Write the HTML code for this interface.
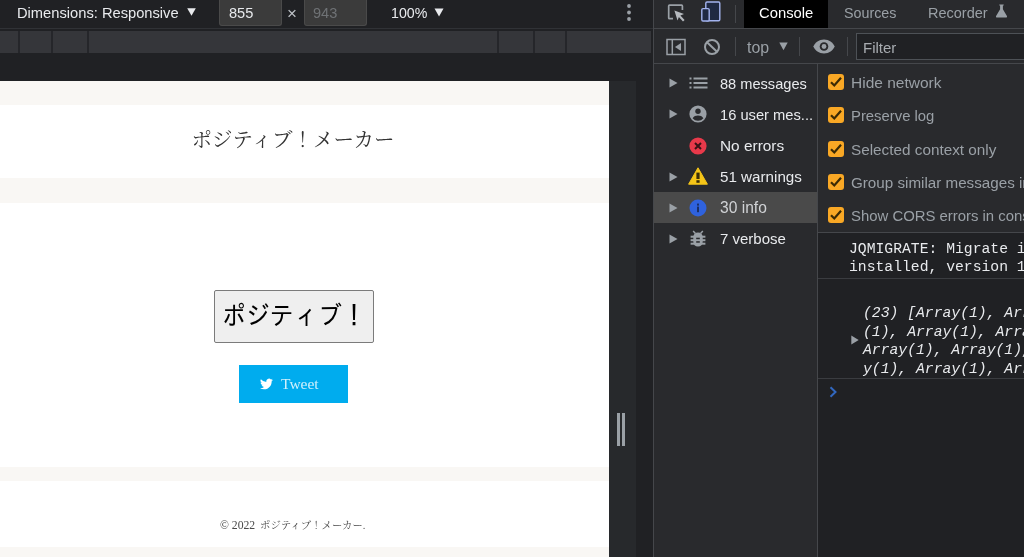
<!DOCTYPE html>
<html lang="ja">
<head>
<meta charset="utf-8">
<title>ポジティブ！メーカー</title>
<style>
*{box-sizing:border-box;margin:0;padding:0}
html,body{width:1024px;height:557px;overflow:hidden;background:#202124}
body{position:relative;font-family:"Liberation Sans","Noto Sans CJK JP",sans-serif;font-size:14.6px;color:#e8eaed}
.abs{position:absolute}
.t{will-change:transform}
.t{position:absolute;white-space:pre;line-height:20px;height:20px}
/* ---------- device toolbar (left) ---------- */
#devbar{left:0;top:0;width:653px;height:28px;background:#202124}
#devline{left:0;top:28px;width:653px;height:1px;background:#303236}
#ruler{left:0;top:31px;width:651px;height:22px;background:#35363a}
.tick{position:absolute;top:31px;width:2px;height:22px;background:#25262a}
.inp{position:absolute;top:0;height:26px;background:#3b3b3b;border:1px solid #4a4a4a;border-top:none;border-radius:0 0 3px 3px}
/* ---------- page ---------- */
#page{left:0;top:81px;width:609px;height:476px;background:#f9f7f4;overflow:hidden}
.white{position:absolute;left:0;width:609px;background:#fff}
#resizer{left:609px;top:81px;width:27px;height:476px;background:#27292c}
/* ---------- devtools ---------- */
#dt{left:653px;top:0;width:371px;height:557px;background:#292a2d;border-left:1px solid #45474b}
.hl{position:absolute;height:1px;background:#45474b}
.vl{position:absolute;width:1px;background:#45474b}
.side{color:#e8eaed}
.dim{color:#9aa0a6}
.mono{font-family:"Liberation Mono",monospace;font-size:14.73px;color:#e8eaed;line-height:18px;height:18px}
.cb{position:absolute;left:828px;width:16px;height:16px;border-radius:3px;background:#f9a825}
.cb svg{position:absolute;left:0;top:0}
</style>
</head>
<body>

<!-- ======= device toolbar ======= -->
<div class="abs" id="devbar"></div>
<div class="abs" id="devline"></div>
<div class="t" style="left:17px;top:3px;font-size:14.7px">Dimensions: Responsive</div>
<svg class="abs" style="left:187px;top:8px" width="9" height="8" viewBox="0 0 9 8"><path d="M0.2 0.3h8.6L4.5 7.8z" fill="#e8eaed"/></svg>
<div class="inp" style="left:219px;width:63px"></div>
<div class="t" style="left:229px;top:3px">855</div>
<div class="t dim" style="left:287px;top:4px;font-size:17px;color:#bdc1c6">×</div>
<div class="inp" style="left:304px;width:63px"></div>
<div class="t" style="left:313px;top:3px;color:#6f7275">943</div>
<div class="t" style="left:391px;top:3px;font-size:14.2px">100%</div>
<svg class="abs" style="left:434px;top:8px" width="10" height="9" viewBox="0 0 10 9"><path d="M0.5 0.5h9L5 8.5z" fill="#e8eaed"/></svg>
<svg class="abs" style="left:626px;top:3px" width="6" height="20" viewBox="0 0 6 20"><circle cx="3" cy="3" r="1.9" fill="#9aa0a6"/><circle cx="3" cy="9.5" r="1.9" fill="#9aa0a6"/><circle cx="3" cy="16" r="1.9" fill="#9aa0a6"/></svg>

<div class="abs" id="ruler"></div>
<div class="tick" style="left:18px"></div>
<div class="tick" style="left:51px"></div>
<div class="tick" style="left:87px"></div>
<div class="tick" style="left:497px"></div>
<div class="tick" style="left:533px"></div>
<div class="tick" style="left:565px"></div>

<!-- ======= emulated page ======= -->
<div class="abs" id="page">
  <div class="white" style="top:24px;height:73px"></div>
  <div class="white" style="top:122px;height:264px"></div>
  <div class="white" style="top:400px;height:66px"></div>
</div>
<div class="t" style="left:188px;top:125px;width:210px;height:30px;line-height:30px;text-align:center;font-family:'Liberation Serif','Noto Serif CJK JP','Noto Serif CJK SC',serif;font-size:20.5px;color:#333">ポジティブ！メーカー</div>

<div class="abs" style="left:214px;top:290px;width:160px;height:53px;background:#efefef;border:1px solid #7b7b7b;border-radius:2px"></div>
<div class="t" style="left:222px;top:300px;height:30px;line-height:30px;font-size:24px;color:#000;font-family:'IPAGothic','Noto Sans CJK JP',sans-serif;transform:scaleY(1.1)">ポジティブ！</div>

<div class="abs" style="left:239px;top:365px;width:109px;height:38px;background:#00acee"></div>
<svg class="abs" style="left:260px;top:378px" width="13" height="12" viewBox="0 0 24 20"><path fill="#fff" d="M24 2.4a9.8 9.8 0 0 1-2.8.8A4.9 4.9 0 0 0 23.3.5a9.900000000000001 9.900000000000001 0 0 1-3.100000000000001 1.2A4.900000000000001 4.900000000000001 0 0 0 11.8 6.2 14 14 0 0 1 1.7.999999A4.900000000000001 4.900000000000001 0 0 0 3.2 7.6a4.900000000000001 4.900000000000001 0 0 1-2.2-.6v.1a4.900000000000001 4.900000000000001 0 0 0 3.900000000000001 4.8 4.900000000000001 4.900000000000001 0 0 1-2.2.1 4.900000000000001 4.900000000000001 0 0 0 4.6 3.4A9.900000000000001 9.900000000000001 0 0 1 0 17.5 14 14 0 0 0 7.5 19.7c9.100000000000001 0 14-7.5 14-14v-.6A10 10 0 0 0 24 2.4z"/></svg>
<div class="t" style="left:281px;top:374px;font-family:'Liberation Serif',serif;font-size:15.5px;color:rgba(255,255,255,.82)">Tweet</div>

<div class="t" style="left:220px;top:516px;font-family:'Liberation Serif','Noto Serif CJK JP','Noto Serif CJK SC',serif;font-size:11.7px;color:#4a4a4a">© 2022 </div>
<div class="t" style="left:260px;top:516px;font-family:'Liberation Serif','Noto Serif CJK JP','Noto Serif CJK SC',serif;font-size:10.4px;color:#4a4a4a">ポジティブ！メーカー.</div>

<div class="abs" id="resizer"></div>
<div class="abs" style="left:617px;top:413px;width:3px;height:33px;background:#9aa0a6"></div>
<div class="abs" style="left:622px;top:413px;width:3px;height:33px;background:#9aa0a6"></div>

<!-- ======= devtools ======= -->
<div class="abs" id="dt"></div>
<div class="hl" style="left:654px;top:28px;width:370px"></div>
<div class="hl" style="left:654px;top:63px;width:370px"></div>

<!-- tab bar -->
<svg class="abs" style="left:667px;top:3px" width="20" height="20" viewBox="0 0 20 20" fill="none" stroke="#9aa0a6" stroke-width="1.7"><path d="M6 15.7H2.5a.8.8 0 0 1-.8-.8V3a.8.8 0 0 1 .8-.8h12.100000000000001a.8.8 0 0 1 .8.8v4"/><path d="M7.4 7.4l9.6 3.7-3.6 1.5 4.2 4.4-1.6 1.5-4.100000000000001-4.5-1.4 3.6z" fill="#b5b9be" stroke="none"/></svg>
<svg class="abs" style="left:700px;top:0px" width="22" height="23" viewBox="0 0 22 23" fill="#1f2942" stroke="#a3b3ee" stroke-width="1.4"><rect x="5.8" y="2" width="14" height="18.7" rx="1.2"/><rect x="1.8" y="8.6" width="7.4" height="12.4" rx="1.2"/></svg>
<div class="vl" style="left:735px;top:5px;height:18px"></div>
<div class="abs" style="left:744px;top:0;width:84px;height:28px;background:#000"></div>
<div class="t" style="left:759px;top:3px;font-size:14.8px;color:#fff">Console</div>
<div class="t dim" style="left:844px;top:3px;font-size:14.3px">Sources</div>
<div class="t dim" style="left:928px;top:3px;font-size:14.5px">Recorder</div>
<svg class="abs" style="left:995px;top:4px" width="13" height="14" viewBox="0 0 13 13" preserveAspectRatio="none"><path d="M4.3 0.5h4.4v1h-.8v3.3l4 6.3c.4.7 0 1.4-.8 1.4H1.9c-.8 0-1.2-.7-.8-1.4l4-6.3V1.5h-.8z" fill="#9aa0a6"/></svg>

<!-- console toolbar -->
<svg class="abs" style="left:666px;top:38px" width="20" height="18" viewBox="0 0 20 18" fill="none" stroke="#9aa0a6" stroke-width="1.5"><rect x="1" y="1.5" width="18" height="15"/><path d="M6.3 1.5v15"/><path d="M15 5v8l-6-4z" fill="#9aa0a6" stroke="none"/></svg>
<svg class="abs" style="left:703px;top:38px" width="18" height="18" viewBox="0 0 18 18" fill="none" stroke="#9aa0a6" stroke-width="2"><circle cx="9" cy="9" r="7"/><path d="M4 4.2l10 9.6"/></svg>
<div class="vl" style="left:735px;top:37px;height:19px"></div>
<div class="t dim" style="left:747px;top:38px;font-size:15.9px">top</div>
<svg class="abs" style="left:779px;top:42px" width="9" height="9" viewBox="0 0 9 9"><path d="M0.3 0.5h8.4L4.5 8.3z" fill="#9aa0a6"/></svg>
<div class="vl" style="left:799px;top:37px;height:19px"></div>
<svg class="abs" style="left:813px;top:39px" width="22" height="15" viewBox="0 0 22 15"><path d="M11 0.5C6 0.5 2 3.6 0.4 7.5 2 11.4 6 14.5 11 14.5s9-3.100000000000001 10.6-7C20 3.6 16 0.5 11 0.5z" fill="#9aa0a6"/><circle cx="11" cy="7.5" r="4.3" fill="#292a2d"/><circle cx="11" cy="7.5" r="2.4" fill="#9aa0a6"/></svg>
<div class="vl" style="left:847px;top:37px;height:19px"></div>
<div class="abs" style="left:856px;top:33px;width:180px;height:27px;background:#202124;border:1px solid #4d5156"></div>
<div class="t dim" style="left:863px;top:38px;font-size:15px;color:#a8acb1">Filter</div>

<!-- sidebar -->
<div class="vl" style="left:817px;top:64px;height:493px"></div>
<div class="abs" style="left:654px;top:192px;width:163px;height:31px;background:#4a4a4a"></div>
<svg class="abs" style="left:669px;top:78px" width="9" height="10" viewBox="0 0 9 10"><path d="M0.5 0.5v9L8.5 5z" fill="#9aa0a6"/></svg>
<svg class="abs" style="left:669px;top:109px" width="9" height="10" viewBox="0 0 9 10"><path d="M0.5 0.5v9L8.5 5z" fill="#9aa0a6"/></svg>
<svg class="abs" style="left:669px;top:172px" width="9" height="10" viewBox="0 0 9 10"><path d="M0.5 0.5v9L8.5 5z" fill="#9aa0a6"/></svg>
<svg class="abs" style="left:669px;top:203px" width="9" height="10" viewBox="0 0 9 10"><path d="M0.5 0.5v9L8.5 5z" fill="#9aa0a6"/></svg>
<svg class="abs" style="left:669px;top:234px" width="9" height="10" viewBox="0 0 9 10"><path d="M0.5 0.5v9L8.5 5z" fill="#9aa0a6"/></svg>

<svg class="abs" style="left:689px;top:77px" width="19" height="12" viewBox="0 0 19 12" fill="#9aa0a6"><rect x="0.5" y="0.5" width="2" height="2"/><rect x="4.5" y="0.5" width="14" height="2"/><rect x="0.5" y="5" width="2" height="2"/><rect x="4.5" y="5" width="14" height="2"/><rect x="0.5" y="9.5" width="2" height="2"/><rect x="4.5" y="9.5" width="14" height="2"/></svg>
<svg class="abs" style="left:689px;top:105px" width="18" height="18" viewBox="0 0 18 18"><circle cx="9" cy="9" r="8.6" fill="#9aa0a6"/><circle cx="9" cy="6.300000000000001" r="2.7" fill="#292a2d"/><path d="M3.6 13.2c1.2-2 3.2-2.7 5.4-2.7s4.2.7 5.4 2.7A6.8 6.8 0 0 1 9 15.8a6.8 6.8 0 0 1-5.4-2.6z" fill="#292a2d"/></svg>
<svg class="abs" style="left:689px;top:137px" width="18" height="18" viewBox="0 0 18 18"><circle cx="9" cy="9" r="8.6" fill="#e8394a"/><path d="M6 6l6 6M12 6l-6 6" stroke="#3a1216" stroke-width="2" fill="none"/></svg>
<svg class="abs" style="left:688px;top:167px" width="20" height="18" viewBox="0 0 20 18"><path d="M10 0.8L19.4 17.2H0.6z" fill="#f5c518" stroke="#f5c518" stroke-width="1" stroke-linejoin="round"/><rect x="8.4" y="5.6" width="3.2" height="6.4" fill="#3a2d05"/><rect x="8.4" y="13.2" width="3.2" height="2.6" fill="#3a2d05"/></svg>
<svg class="abs" style="left:689px;top:199px" width="18" height="18" viewBox="0 0 18 18"><circle cx="9" cy="9" r="8.5" fill="#2f62dd"/><rect x="8" y="7.6" width="2" height="5.6" fill="#1a2f66"/><rect x="8" y="4.6" width="2" height="2" fill="#1a2f66"/></svg>
<svg class="abs" style="left:690px;top:230px" width="16" height="18" viewBox="0 0 16 18" fill="#9aa0a6"><path d="M8 2.6c2.800000000000001 0 4.7 2 4.7 4.6v4.6c0 2.8-1.9 4.800000000000001-4.7 4.800000000000001s-4.7-2-4.7-4.800000000000001V7.2C3.300000000000001 4.6 5.2 2.6 8 2.6z"/><rect x="0.6" y="5.7" width="14.8" height="2"/><rect x="0.6" y="9.200000000000001" width="14.8" height="2"/><rect x="0.6" y="12.7" width="14.8" height="2"/><path d="M3.7 0.4l2.300000000000001 2.5-1.1 1-2.300000000000001-2.5zM12.3 0.4l-2.300000000000001 2.5 1.1 1 2.300000000000001-2.5z"/><rect x="6.2" y="7.7" width="3.6" height="1.5" fill="#292a2d"/><rect x="6.2" y="11.2" width="3.6" height="1.5" fill="#292a2d"/></svg>

<div class="t side" style="left:720px;top:74px">88 messages</div>
<div class="t side" style="left:720px;top:105px;font-size:14.7px">16 user mes...</div>
<div class="t side" style="left:720px;top:136px;font-size:15.4px">No errors</div>
<div class="t side" style="left:720px;top:167px;font-size:15.2px">51 warnings</div>
<div class="t side" style="left:720px;top:198px;font-size:15.6px;color:#d0d2d5">30 info</div>
<div class="t side" style="left:720px;top:229px;font-size:15px">7 verbose</div>

<!-- filter checkboxes -->
<div class="cb" style="top:74px"><svg width="16" height="16" viewBox="0 0 16 16"><path d="M3 8.2l3.300000000000001 3.300000000000001 6.7-7.7" fill="none" stroke="#3a2a05" stroke-width="2.2"/></svg></div>
<div class="cb" style="top:107px"><svg width="16" height="16" viewBox="0 0 16 16"><path d="M3 8.2l3.300000000000001 3.300000000000001 6.7-7.7" fill="none" stroke="#3a2a05" stroke-width="2.2"/></svg></div>
<div class="cb" style="top:141px"><svg width="16" height="16" viewBox="0 0 16 16"><path d="M3 8.2l3.300000000000001 3.300000000000001 6.7-7.7" fill="none" stroke="#3a2a05" stroke-width="2.2"/></svg></div>
<div class="cb" style="top:174px"><svg width="16" height="16" viewBox="0 0 16 16"><path d="M3 8.2l3.300000000000001 3.300000000000001 6.7-7.7" fill="none" stroke="#3a2a05" stroke-width="2.2"/></svg></div>
<div class="cb" style="top:207px"><svg width="16" height="16" viewBox="0 0 16 16"><path d="M3 8.2l3.300000000000001 3.300000000000001 6.7-7.7" fill="none" stroke="#3a2a05" stroke-width="2.2"/></svg></div>
<div class="t dim" style="left:851px;top:73px;font-size:15.5px">Hide network</div>
<div class="t dim" style="left:851px;top:106px;font-size:14.85px">Preserve log</div>
<div class="t dim" style="left:851px;top:140px;font-size:15.3px">Selected context only</div>
<div class="t dim" style="left:851px;top:173px;font-size:15.2px">Group similar messages in console</div>
<div class="t dim" style="left:851px;top:206px;font-size:14.9px">Show CORS errors in console</div>

<!-- console messages -->
<div class="abs" style="left:818px;top:233px;width:206px;height:324px;background:#202124"></div>
<div class="hl" style="left:818px;top:232px;width:206px"></div>
<div class="t mono" style="left:849px;top:240px">JQMIGRATE: Migrate is</div>
<div class="t mono" style="left:849px;top:258px">installed, version 1.4.1</div>
<div class="hl" style="left:818px;top:278px;width:206px;background:#3a3c40"></div>
<svg class="abs" style="left:851px;top:335px" width="8" height="10" viewBox="0 0 8 10"><path d="M0.3 0.5v9L7.7 5z" fill="#9aa0a6"/></svg>
<div class="t mono" style="left:863px;top:304px;font-style:italic">(23) [Array(1), Array</div>
<div class="t mono" style="left:863px;top:323px;font-style:italic">(1), Array(1), Array(1),</div>
<div class="t mono" style="left:863px;top:341px;font-style:italic">Array(1), Array(1), Arra</div>
<div class="t mono" style="left:863px;top:360px;font-style:italic">y(1), Array(1), Array(1),</div>
<div class="hl" style="left:818px;top:378px;width:206px;background:#3a3c40"></div>
<svg class="abs" style="left:829px;top:386px" width="9" height="12" viewBox="0 0 9 12"><path d="M1.5 1.2L6.5 6l-5 4.800000000000001" fill="none" stroke="#3268c0" stroke-width="2"/></svg>

</body>
</html>
